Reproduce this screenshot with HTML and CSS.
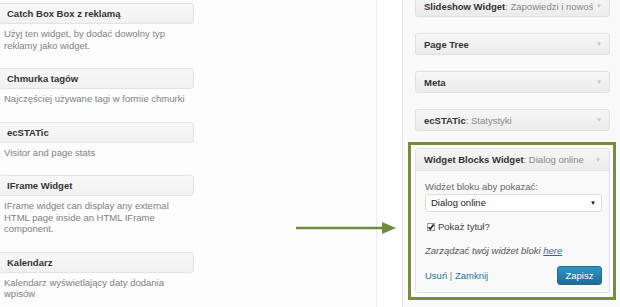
FILE: index.html
```html
<!DOCTYPE html>
<html lang="pl">
<head>
    <meta charset="UTF-8">
    <title>Widżety</title>
    <link rel="stylesheet" href="styles.css">
</head>
<body>
    <div class="screen">
        <div class="available">
            <div class="widget-list">
                <div class="widget">
                    <div class="widget-title">Catch Box Box z reklamą</div>
                    <div class="widget-desc">Użyj ten widget, by dodać dowolny typ reklamy jako widget.</div>
                </div>
                <div class="widget">
                    <div class="widget-title">Chmurka tagów</div>
                    <div class="widget-desc">Najczęściej używane tagi w formie chmurki</div>
                </div>
                <div class="widget">
                    <div class="widget-title">ecSTATic</div>
                    <div class="widget-desc">Visitor and page stats</div>
                </div>
                <div class="widget">
                    <div class="widget-title">IFrame Widget</div>
                    <div class="widget-desc">IFrame widget can display any external HTML page inside an HTML IFrame component.</div>
                </div>
                <div class="widget">
                    <div class="widget-title">Kalendarz</div>
                    <div class="widget-desc">Kalendarz wyświetlający daty dodania wpisów</div>
                </div>
            </div>
        </div>

        <div class="sidebar">
            <div class="widget-top first">
                <span class="name">Slideshow Widget<span class="sub">: Zapowiedzi i nowoś</span></span>
                <span class="toggle">▼</span>
            </div>
            <div class="widget-top">
                <span class="name">Page Tree</span>
                <span class="toggle">▼</span>
            </div>
            <div class="widget-top">
                <span class="name">Meta</span>
                <span class="toggle">▼</span>
            </div>
            <div class="widget-top">
                <span class="name">ecSTATic<span class="sub">: Statystyki</span></span>
                <span class="toggle">▼</span>
            </div>

            <div class="highlight">
                <div class="widget-open">
                    <div class="open-top">
                        <span class="name">Widget Blocks Widget<span class="sub">: Dialog online</span></span>
                        <span class="toggle">▼</span>
                    </div>
                    <div class="open-body">
                        <div class="field-label">Widżet bloku aby pokazać:</div>
                        <div class="select">
                            <span>Dialog online</span>
                            <span class="select-arrow">▼</span>
                        </div>
                        <div class="check-row">
                            <svg class="check" width="8" height="8" viewBox="0 0 8 8">
                                <rect x="0.5" y="0.5" width="7" height="7" fill="#fff" stroke="#999"/>
                                <path d="M1.6 4.2 L3.3 6 L6.6 1.6" fill="none" stroke="#222" stroke-width="1.6"/>
                            </svg>
                            <span>Pokaż tytuł?</span>
                        </div>
                        <div class="manage">Zarządzać twój widżet bloki <a href="#">here</a></div>
                        <div class="actions">
                            <div class="links"><a href="#">Usuń</a> | <a href="#">Zamknij</a></div>
                            <button class="save">Zapisz</button>
                        </div>
                    </div>
                </div>
            </div>
        </div>

        <svg class="pointer" width="104" height="16" viewBox="0 0 104 16">
            <line x1="0" y1="8" x2="88" y2="8" stroke="#6f8c3e" stroke-width="2.5"/>
            <polygon points="86,2 100,8 86,14" fill="#6f8c3e"/>
        </svg>
    </div>
</body>
</html>
```

FILE: styles.css
```css
body {
    margin: 0;
    background: #fff;
    font-family: "Liberation Sans", Arial, sans-serif;
    font-size: 9.5px;
    color: #333;
}
.screen {
    position: relative;
    display: flex;
    width: 620px;
    height: 307px;
    overflow: hidden;
}
.available {
    width: 376px;
    flex-shrink: 0;
    border-right: 1px solid #ececec;
    background: #fdfdfd;
}
.widget-list {
    width: 196px;
    margin: 3px 0 0 -2px;
}
.widget {
    margin-bottom: 17px;
}
.widget-title {
    height: 19px;
    line-height: 19px;
    padding: 0 8px;
    border: 1px solid #e3e3e3;
    border-radius: 3px;
    background: linear-gradient(#f8f8f8, #f1f1f1);
    font-weight: bold;
    color: #333;
}
.widget-desc {
    margin-top: 4px;
    padding: 0 4px 0 6px;
    line-height: 11.5px;
    color: #808080;
}
.sidebar {
    flex: 1;
    min-width: 0;
    margin-left: 25px;
    border-left: 1px solid #e6e6e6;
    background: #f9f9f9;
    padding: 0 4px 0 5px;
}
.widget-top {
    display: flex;
    justify-content: space-between;
    align-items: center;
    height: 20px;
    margin: 0 6px 16px 7px;
    padding: 0 7px 0 8px;
    border: 1px solid #e0e0e0;
    border-radius: 3px;
    background: linear-gradient(#f6f6f6, #ececec);
}
.widget-top.first {
    margin-top: -5px;
}
.name {
    min-width: 0;
    font-weight: bold;
    color: #333;
    white-space: nowrap;
    overflow: hidden;
}
.sub {
    font-weight: normal;
    color: #888;
}
.toggle {
    flex-shrink: 0;
    margin-left: 3px;
    font-size: 6px;
    color: #c4c4c4;
}
.highlight {
    margin-top: -5px;
    padding: 3px 3px 4px 4px;
    border: 3px solid #74903f;
    background: #fff;
}
.widget-open {
    border: 1px solid #e0e0e0;
    border-radius: 3px;
    background: #f9f9f9;
}
.open-top {
    display: flex;
    justify-content: space-between;
    align-items: center;
    height: 21px;
    padding: 0 8px;
    border-bottom: 1px solid #e3e3e3;
    background: linear-gradient(#f6f6f6, #ececec);
}
.open-body {
    padding: 10px 7px 7px 9px;
    line-height: 12px;
}
.field-label {
    color: #666;
}
.select {
    display: flex;
    justify-content: space-between;
    align-items: center;
    height: 16px;
    margin-top: 1px;
    padding: 0 5px;
    border: 1px solid #dcdcdc;
    border-radius: 3px;
    background: #fff;
    color: #222;
}
.select-arrow {
    font-size: 6px;
    color: #111;
}
.check-row {
    display: flex;
    align-items: center;
    gap: 3px;
    margin-top: 9px;
    padding-left: 2px;
    color: #444;
}
.manage {
    margin-top: 12px;
    font-style: italic;
    color: #555;
}
.manage a,
.links a {
    color: #21759b;
}
.links a {
    text-decoration: none;
}
.links {
    color: #777;
}
.actions {
    display: flex;
    justify-content: space-between;
    align-items: center;
    margin-top: 9px;
}
.save {
    width: 45px;
    height: 19px;
    padding: 0;
    border: 1px solid #1f6c93;
    border-radius: 3px;
    background: linear-gradient(#2e96c8, #1f6c94);
    color: #fff;
    font-family: inherit;
    font-size: 9.5px;
}
.pointer {
    position: absolute;
    left: 296px;
    top: 220px;
}
```
